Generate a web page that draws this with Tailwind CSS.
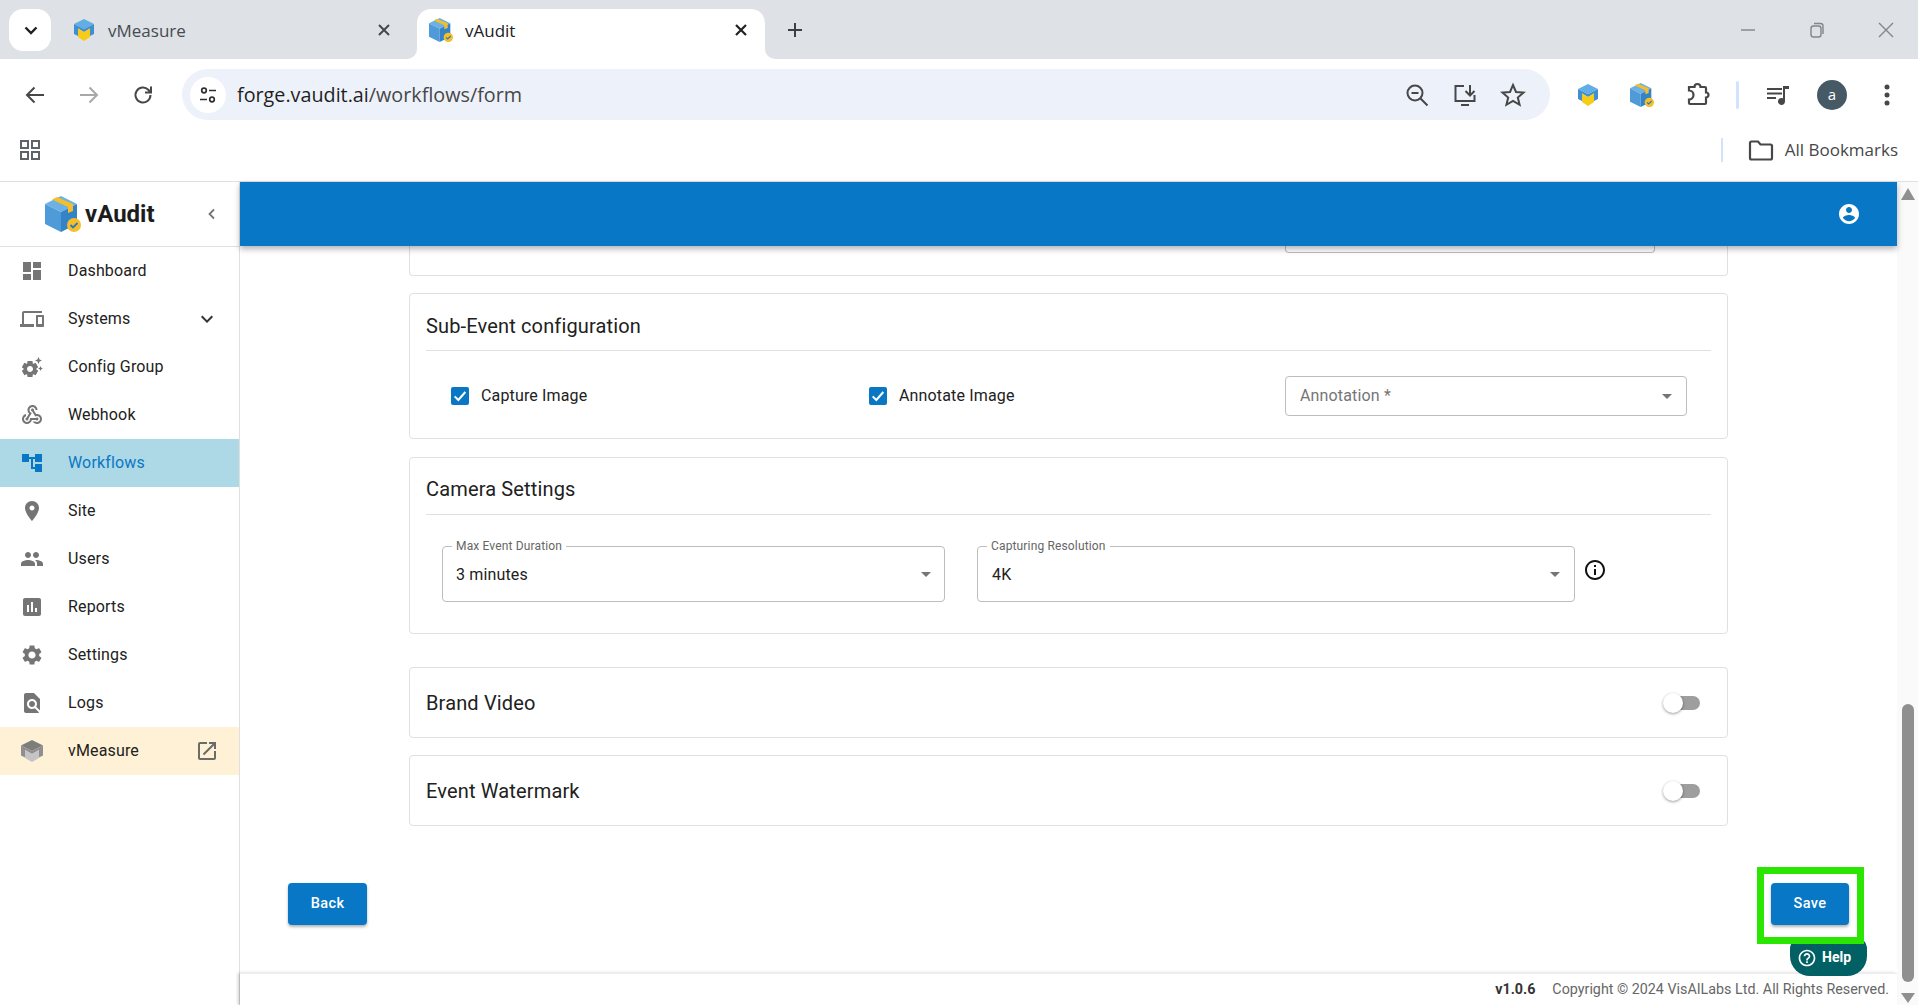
<!DOCTYPE html>
<html lang="en">

<head>
  <meta charset="UTF-8">
  <meta name="viewport" content="width=device-width, initial-scale=1.0">
  <title>vAudit</title>
  <script src="https://cdn.jsdelivr.net/npm/@tailwindcss/browser@4"></script>
</head>

<body class="w-[1918px] h-[1005px] overflow-hidden bg-white font-['Roboto',sans-serif] text-[#212121]">
  <svg class="absolute w-0 h-0">
    <symbol id="cube" viewBox="0 0 36 36">
      <polygon points="16,0 32,8 16,16 0,8" fill="#6db0e4" />
      <polygon points="0,8 16,16 16,36 0,28" fill="#4f9ad8" />
      <polygon points="16,16 32,8 32,28 16,36" fill="#3583c7" />
      <polygon points="7,3.5 12,1 28,8 28,15 23,17 23,11" fill="#f4bf2a" />
      <circle cx="29" cy="29" r="7" fill="#f4bf2a" />
      <path d="M25.5 29l2.5 2.5 4.5-4.5" fill="none" stroke="#2f78bd" stroke-width="1.8" />
    </symbol>
    <symbol id="cap" viewBox="0 0 24 24">
      <polygon points="12,1 22,6 12,11 2,6" fill="#62ade3" />
      <polygon points="2,6 12,11 12,14 6,10.5 6,18 2,16" fill="#3f8fd1" />
      <polygon points="22,6 12,11 12,14 18,10.5 18,18 22,16" fill="#3f8fd1" />
      <polygon points="6,10.5 12,14 18,10.5 18,19 12,23 6,19" fill="#f7cb17" />
    </symbol>
  </svg>

  <!-- tab strip -->
  <div class="flex h-[59px] bg-[#dee1e6] pl-[9px]">
    <div class="mt-[9px] flex h-[42px] w-[42px] items-center justify-center rounded-[14px] bg-white">
      <svg class="ml-[1px] h-[18px] w-[18px]" viewBox="0 0 18 18" fill="none" stroke="#1f1f1f" stroke-width="2.4"><path d="M3.5 6.5 9 12l5.5-5.5" /></svg>
    </div>
    <div class="flex h-[42px] w-[366px] mt-[9px] items-center pl-[21px] pr-[24px]">
      <svg class="h-[24px] w-[24px]"><use href="#cap" /></svg>
      <span class="ml-[12px] pt-[1px] font-['Open_Sans',sans-serif] text-[17px] text-[#454b50]">vMeasure</span>
      <svg class="ml-auto h-[18px] w-[18px]" viewBox="0 0 18 18" stroke="#45484c" stroke-width="2"><path d="M4 4l10 10M14 4 4 14" /></svg>
    </div>
    <div class="relative mt-[9px] flex h-[50px] w-[348px] items-center rounded-t-[14px] bg-white pb-[8px] pl-[12px] pr-[15px]">
      <svg class="absolute -left-[10px] bottom-0 h-[10px] w-[10px]" viewBox="0 0 10 10"><path d="M10 0v10H0a10 10 0 0 0 10-10z" fill="#fff" /></svg>
      <svg class="absolute -right-[10px] bottom-0 h-[10px] w-[10px]" viewBox="0 0 10 10"><path d="M0 0v10h10A10 10 0 0 1 0 0z" fill="#fff" /></svg>
      <svg class="h-[24px] w-[24px]"><use href="#cube" /></svg>
      <span class="ml-[12px] pt-[1px] font-['Open_Sans',sans-serif] text-[17px] text-[#202124]">vAudit</span>
      <svg class="ml-auto h-[18px] w-[18px]" viewBox="0 0 18 18" stroke="#202124" stroke-width="2.2"><path d="M4 4l10 10M14 4 4 14" /></svg>
    </div>
    <svg class="ml-[21px] mt-[21px] h-[18px] w-[18px]" viewBox="0 0 18 18" stroke="#3c4043" stroke-width="2"><path d="M9 2v14M2 9h14" /></svg>
    <div class="ml-auto flex h-[60px] items-center gap-[51px] pr-[23px]">
      <svg class="h-[18px] w-[18px]" viewBox="0 0 18 18" stroke="#80868b" stroke-width="1.4"><path d="M2 9h14" /></svg>
      <svg class="h-[18px] w-[18px]" viewBox="0 0 18 18" fill="none" stroke="#80868b" stroke-width="1.4"><rect x="3" y="5" width="10" height="11" rx="2.5" /><path d="M6 2.5h6.5A2.5 2.5 0 0 1 15 5v8" /></svg>
      <svg class="h-[18px] w-[18px]" viewBox="0 0 18 18" stroke="#80868b" stroke-width="1.4"><path d="M2 2l14 14M16 2 2 16" /></svg>
    </div>
  </div>

  <!-- toolbar -->
  <div class="relative flex h-[71px] rounded-t-[12px] bg-white pl-[23px]">
    <div class="flex h-[71px] w-[159px] items-center">
      <svg class="h-[24px] w-[24px]" viewBox="0 0 24 24" fill="none" stroke="#474747" stroke-width="2"><path d="M21 12H4M11.5 4.5 4 12l7.5 7.5" /></svg>
      <svg class="ml-[30px] h-[24px] w-[24px]" viewBox="0 0 24 24" fill="none" stroke="#a8a8a8" stroke-width="2"><path d="M3 12h17M12.5 4.5 20 12l-7.5 7.5" /></svg>
      <svg class="ml-[30px] h-[24px] w-[24px]" viewBox="0 0 24 24" fill="none" stroke="#474747" stroke-width="2"><path d="M19.5 12a7.5 7.5 0 1 1-2.2-5.3L20 9.5M20 3.5v6h-6" /></svg>
    </div>
    <div class="mt-[10px] flex h-[51px] w-[1368px] items-center rounded-full bg-[#edf2fa] pl-[8px] pr-[24px]">
      <div class="flex h-[36px] w-[36px] items-center justify-center rounded-full bg-white">
        <svg class="h-[20px] w-[20px]" viewBox="0 0 20 20" fill="none" stroke="#303030" stroke-width="1.7"><circle cx="6" cy="5.5" r="2.3" /><path d="M11 5.5h7M2 14.5h7" /><circle cx="14" cy="14.5" r="2.3" /></svg>
      </div>
      <span class="ml-[11px] font-['Open_Sans',sans-serif] text-[19.75px] text-[#1f1f1f]">forge.vaudit.ai<span class="text-[#474747]">/workflows/form</span></span>
      <svg class="ml-auto h-[26px] w-[26px]" viewBox="0 0 26 26" fill="none" stroke="#474747" stroke-width="2"><circle cx="11" cy="11" r="7.5" /><path d="M7.5 11h7M16.5 16.5l7 7" /></svg>
      <svg class="ml-[22px] h-[26px] w-[26px]" viewBox="0 0 26 26" fill="none" stroke="#474747" stroke-width="2"><path d="M12 4H3.500v15h19v-6M9 23h8M18 3v10M13.500 9l4.500 4.500 4.500-4.500" /></svg>
      <svg class="ml-[22px] h-[26px] w-[26px]" viewBox="0 0 26 26" fill="none" stroke="#474747" stroke-width="2"><path d="M13 3l3 7 7.500.6-5.700 4.900 1.800 7.300L13 19l-6.600 3.800 1.800-7.300-5.700-4.900L10 10z" /></svg>
    </div>
    <div class="mt-[10px] flex h-[51px] items-center">
      <svg class="ml-[26px] h-[24px] w-[24px]"><use href="#cap" /></svg>
      <svg class="ml-[30px] h-[24px] w-[24px]"><use href="#cube" /></svg>
      <svg class="ml-[31px] h-[26px] w-[26px]" viewBox="0 0 26 26" fill="none" stroke="#474747" stroke-width="2.2"><path d="M4 5h5.500a3 3 0 0 1 6 0H20a1 1 0 0 1 1 1v4.500a2.500 2.500 0 0 1 0 5V21a1 1 0 0 1-1 1H5a1 1 0 0 1-1-1v-3.500a4.500 4.500 0 0 0 0-9z" /></svg>
      <div class="ml-[25px] h-[28px] w-[3px] rounded-full bg-[#d3e3fd]"></div>
      <svg class="ml-[27px] h-[24px] w-[24px]" viewBox="0 0 24 24" fill="#474747"><path d="M1 5h15v2H1zM1 9.500h15v2H1zM1 14h9v2H1zM17 3h6v3h-4v12.500a3.500 3.500 0 1 1-2-3.200z" /></svg>
      <div class="ml-[27px] flex h-[30px] w-[30px] items-center justify-center rounded-full bg-[#455a64] font-['Open_Sans',sans-serif] text-[15px] text-white">a</div>
      <svg class="ml-[37px] h-[22px] w-[6px]" viewBox="0 0 6 22" fill="#474747"><circle cx="3" cy="3" r="2.500" /><circle cx="3" cy="11" r="2.500" /><circle cx="3" cy="19" r="2.500" /></svg>
    </div>
  </div>

  <!-- bookmarks bar -->
  <div class="flex h-[52px] items-center border-b border-[#e0e0e0] pb-[11px] pl-[20px] pr-[20px]">
    <svg class="h-[20px] w-[20px]" viewBox="0 0 20 20" fill="none" stroke="#5f6368" stroke-width="2"><rect x="1" y="1" width="7" height="7" /><rect x="12" y="1" width="7" height="7" /><rect x="1" y="12" width="7" height="7" /><rect x="12" y="12" width="7" height="7" /></svg>
    <div class="ml-auto h-[24px] w-[2px] bg-[#d3e3fd]"></div>
    <svg class="ml-[25px] h-[24px] w-[26px]" viewBox="0 0 26 24" fill="none" stroke="#474747" stroke-width="2.200"><path d="M2 5a1.500 1.500 0 0 1 1.500-1.500H10l2.500 3h10A1.500 1.500 0 0 1 24 8v12a1.500 1.500 0 0 1-1.500 1.500h-19A1.500 1.500 0 0 1 2 20z" /></svg>
    <span class="ml-[11px] font-['Open_Sans',sans-serif] text-[17px] text-[#474747]">All Bookmarks</span>
  </div>

  <div class="flex h-[823px]">
    <!-- sidebar -->
    <aside class="h-full w-[240px] shrink-0 border-r border-[#e0e0e0]">
      <div class="flex h-[65px] items-center border-b border-[#e0e0e0] pl-[45px]">
        <svg class="h-[36px] w-[36px]"><use href="#cube" /></svg>
        <span class="ml-[4px] text-[24px] font-bold text-[#1c1c1c]">vAudit</span>
        <svg class="ml-[45px] h-[24px] w-[24px]" viewBox="0 0 24 24" fill="none" stroke="#757575" stroke-width="1.800"><path d="M14 7.500 9.500 12l4.500 4.500" /></svg>
      </div>
      <nav class="text-[16px] tracking-[0.15px]">
        <a class="flex h-[48px] items-center pl-[20px]">
          <svg class="h-[24px] w-[24px] fill-[#757575]" viewBox="0 0 24 24"><path d="M3 13h8V3H3v10zm0 8h8v-6H3v6zm10 0h8V11h-8v10zm0-18v6h8V3h-8z" /></svg>
          <span class="ml-[24px]">Dashboard</span>
        </a>
        <a class="flex h-[48px] items-center pl-[20px]">
          <svg class="h-[24px] w-[24px] fill-[#757575]" viewBox="0 0 24 24"><path d="M4 6h18V4H4c-1.100 0-2 .9-2 2v11H0v3h14v-3H4V6zm19 2h-6c-.55 0-1 .45-1 1v10c0 .55.45 1 1 1h6c.55 0 1-.45 1-1V9c0-.55-.45-1-1-1zm-1 9h-4v-7h4v7z" /></svg>
          <span class="ml-[24px]">Systems</span>
          <svg class="ml-auto mr-[20px] h-[24px] w-[24px] fill-[#333333]" viewBox="0 0 24 24"><path d="M16.590 8.590 12 13.170 7.410 8.590 6 10l6 6 6-6z" /></svg>
        </a>
        <a class="flex h-[48px] items-center pl-[20px]">
          <svg class="h-[24px] w-[24px] fill-[#757575]" viewBox="0 0 24 24"><path d="M17.410 6.590 15 5.500l2.410-1.090L18.500 2l1.090 2.410L22 5.500l-2.410 1.090L18.500 9l-1.090-2.410zm3.870 6.130L20.500 11l-.78 1.720-1.720.78 1.720.78.78 1.720.78-1.720L23 13.500l-1.720-.78zm-5.040 1.650 1.940 1.470-2.500 4.330-2.240-.94c-.2.130-.42.260-.64.370l-.3 2.400h-5l-.3-2.410c-.22-.11-.43-.23-.64-.37l-2.240.94-2.500-4.330 1.940-1.470c-.01-.11-.01-.24-.01-.36s0-.25.010-.37l-1.940-1.470 2.500-4.330 2.240.94c.2-.13.42-.26.64-.37L7.500 6h5l.3 2.410c.22.110.43.230.64.370l2.240-.94 2.500 4.330-1.940 1.470c.01.120.01.240.01.370s0 .240-.01.360zM13 14c0-1.660-1.340-3-3-3s-3 1.340-3 3 1.340 3 3 3 3-1.340 3-3z" /></svg>
          <span class="ml-[24px]">Config Group</span>
        </a>
        <a class="flex h-[48px] items-center pl-[20px]">
          <svg class="h-[24px] w-[24px] fill-[#757575]" viewBox="0 0 24 24"><path d="M10 15h5.880c.27-.31.67-.5 1.120-.5.83 0 1.500.67 1.500 1.500s-.67 1.500-1.500 1.500c-.44 0-.84-.19-1.120-.5H11.900c-.46 2.280-2.480 4-4.900 4-2.760 0-5-2.240-5-5 0-2.420 1.720-4.440 4-4.900v2.070c-1.160.41-2 1.530-2 2.830 0 1.650 1.350 3 3 3s3-1.350 3-3v-1zm2.500-11c1.650 0 3 1.350 3 3h2c0-2.760-2.240-5-5-5s-5 2.240-5 5c0 1.430.6 2.710 1.550 3.620l-2.350 3.900c-.68.14-1.200.75-1.200 1.480 0 .83.67 1.500 1.500 1.500s1.500-.67 1.500-1.500c0-.16-.02-.31-.07-.45l3.380-5.630C10.490 9.610 9.500 8.420 9.500 7c0-1.650 1.350-3 3-3zm4.500 9c-.64 0-1.230.2-1.720.54l-3.050-5.070C11.530 8.350 11 7.740 11 7c0-.83.67-1.500 1.500-1.500S14 6.170 14 7c0 .15-.02.29-.06.43l2.190 3.650c.28-.05.57-.08.87-.08 2.760 0 5 2.240 5 5s-2.240 5-5 5c-1.850 0-3.470-1.010-4.330-2.500h2.670c.48.32 1.050.5 1.660.5 1.650 0 3-1.350 3-3s-1.350-3-3-3z" /></svg>
          <span class="ml-[24px]">Webhook</span>
        </a>
        <a class="flex h-[48px] items-center bg-[#add8e6] pl-[20px] text-[#0a77c4]">
          <svg class="h-[24px] w-[24px] fill-[#0a77c4]" viewBox="0 0 24 24"><path d="M22 11V3h-7v3H9V3H2v8h7V8h2v10h4v3h7v-8h-7v3h-2V8h2v3z" /></svg>
          <span class="ml-[24px]">Workflows</span>
        </a>
        <a class="flex h-[48px] items-center pl-[20px]">
          <svg class="h-[24px] w-[24px] fill-[#757575]" viewBox="0 0 24 24"><path d="M12 2C8.130 2 5 5.130 5 9c0 5.250 7 13 7 13s7-7.750 7-13c0-3.870-3.130-7-7-7zm0 9.500c-1.380 0-2.500-1.120-2.500-2.500s1.120-2.500 2.500-2.500 2.500 1.120 2.500 2.500-1.120 2.500-2.500 2.500z" /></svg>
          <span class="ml-[24px]">Site</span>
        </a>
        <a class="flex h-[48px] items-center pl-[20px]">
          <svg class="h-[24px] w-[24px] fill-[#757575]" viewBox="0 0 24 24"><path d="M16 11c1.660 0 2.990-1.340 2.990-3S17.660 5 16 5c-1.660 0-3 1.340-3 3s1.340 3 3 3zm-8 0c1.660 0 2.990-1.340 2.990-3S9.660 5 8 5C6.340 5 5 6.340 5 8s1.340 3 3 3zm0 2c-2.330 0-7 1.170-7 3.500V19h14v-2.500c0-2.330-4.670-3.500-7-3.500zm8 0c-.29 0-.62.02-.97.05 1.160.84 1.970 1.970 1.970 3.450V19h6v-2.500c0-2.330-4.670-3.500-7-3.500z" /></svg>
          <span class="ml-[24px]">Users</span>
        </a>
        <a class="flex h-[48px] items-center pl-[20px]">
          <svg class="h-[24px] w-[24px] fill-[#757575]" viewBox="0 0 24 24"><path d="M19 3H5c-1.100 0-2 .9-2 2v14c0 1.100.9 2 2 2h14c1.100 0 2-.9 2-2V5c0-1.100-.9-2-2-2zM9 17H7v-7h2v7zm4 0h-2V7h2v10zm4 0h-2v-4h2v4z" /></svg>
          <span class="ml-[24px]">Reports</span>
        </a>
        <a class="flex h-[48px] items-center pl-[20px]">
          <svg class="h-[24px] w-[24px] fill-[#757575]" viewBox="0 0 24 24"><path d="M19.140 12.940c.04-.3.06-.61.06-.94 0-.32-.02-.64-.07-.94l2.030-1.580c.18-.14.23-.41.12-.61l-1.920-3.320c-.12-.22-.37-.29-.59-.22l-2.390.96c-.5-.38-1.030-.7-1.620-.94l-.36-2.540c-.04-.24-.24-.41-.48-.41h-3.840c-.24 0-.43.17-.47.41l-.36 2.540c-.59.24-1.130.57-1.620.94l-2.390-.96c-.22-.08-.47 0-.59.22L2.740 8.870c-.12.21-.08.47.12.61l2.030 1.580c-.05.3-.09.63-.09.94s.02.64.07.94l-2.030 1.580c-.18.14-.23.41-.12.61l1.920 3.320c.12.22.37.29.59.22l2.390-.96c.5.38 1.030.7 1.620.94l.36 2.540c.05.24.24.41.48.41h3.840c.24 0 .44-.17.47-.41l.36-2.540c.59-.24 1.130-.56 1.620-.94l2.390.96c.22.08.47 0 .59-.22l1.920-3.320c.12-.22.07-.47-.12-.61l-2.010-1.580zM12 15.600c-1.980 0-3.600-1.620-3.600-3.600s1.620-3.600 3.600-3.600 3.600 1.620 3.600 3.600-1.620 3.600-3.600 3.600z" /></svg>
          <span class="ml-[24px]">Settings</span>
        </a>
        <a class="flex h-[48px] items-center pl-[20px]">
          <svg class="h-[24px] w-[24px] fill-[#757575]" viewBox="0 0 24 24"><path d="M20 19.590V8l-6-6H6c-1.100 0-1.990.9-1.990 2L4 20c0 1.100.89 2 1.990 2H18c.45 0 .85-.15 1.190-.4l-4.430-4.430c-.8.52-1.740.83-2.760.83-2.760 0-5-2.240-5-5s2.240-5 5-5 5 2.240 5 5c0 1.020-.31 1.960-.83 2.750L20 19.590zM9 13c0 1.660 1.340 3 3 3s3-1.340 3-3-1.340-3-3-3-3 1.340-3 3z" /></svg>
          <span class="ml-[24px]">Logs</span>
        </a>
        <a class="flex h-[48px] items-center bg-[#fff1d6] pl-[20px]">
          <svg class="h-[24px] w-[24px]" viewBox="0 0 24 24"><polygon points="12,1 23,6.500 12,12 1,6.500" fill="#7d7d7d" /><polygon points="1,6.500 12,12 12,15 5,11 5,18.500 1,16.500" fill="#8f8f8f" /><polygon points="23,6.500 12,12 12,15 19,11 19,18.500 23,16.500" fill="#8f8f8f" /><polygon points="5,11 12,15 19,11 19,19 12,23 5,19" fill="#c4c4c4" /></svg>
          <span class="ml-[24px]">vMeasure</span>
          <svg class="ml-auto mr-[20px] h-[24px] w-[24px] fill-[#6b6b6b]" viewBox="0 0 24 24"><path d="M19 19H5V5h7V3H5c-1.110 0-2 .9-2 2v14c0 1.100.89 2 2 2h14c1.100 0 2-.9 2-2v-7h-2v7zM14 3v2h3.590l-9.830 9.830 1.410 1.410L19 6.410V10h2V3h-7z" /></svg>
        </a>
      </nav>
    </aside>

    <!-- main column -->
    <main class="relative flex h-full w-[1657px] flex-col">
      <header class="relative z-10 flex h-[64px] shrink-0 items-center justify-end bg-[#0877c5] pr-[36px] shadow-[0_3px_6px_rgba(0,0,0,0.3)]">
        <svg class="h-[24px] w-[24px] fill-white" viewBox="0 0 24 24"><path d="M12 2C6.480 2 2 6.480 2 12s4.480 10 10 10 10-4.480 10-10S17.520 2 12 2zm0 3c1.660 0 3 1.340 3 3s-1.340 3-3 3-3-1.340-3-3 1.340-3 3-3zm0 14.200c-2.500 0-4.710-1.280-6-3.220.03-1.990 4-3.080 6-3.080 1.990 0 5.970 1.090 6 3.080-1.290 1.940-3.500 3.220-6 3.220z" /></svg>
      </header>

      <div class="flex flex-1 flex-col px-[48px]">
        <div class="mx-[121px] flex flex-col">
          <!-- bottom of the card above, scrolled away -->
          <div class="h-[30px] rounded-b-[4px] border-x border-b border-[#e0e0e0]">
            <div class="ml-[875px] h-[7px] w-[370px] rounded-b-[4px] border-x border-b border-[#bdbdbd]"></div>
          </div>

          <section class="mt-[17px] h-[146px] rounded-[4px] border border-[#e0e0e0] px-[16px]">
            <h2 class="flex h-[57px] items-center border-b border-[#e0e0e0] pt-[8px] text-[20px] tracking-[0.15px]">Sub-Event configuration</h2>
            <div class="mt-[25px] flex h-[40px] items-center pl-[25px] text-[16px] tracking-[0.15px]">
              <label class="flex w-[418px] items-center">
                <span class="flex h-[18px] w-[18px] items-center justify-center rounded-[2px] bg-[#0a77c4]">
                  <svg class="h-[16px] w-[16px]" viewBox="0 0 24 24" fill="none" stroke="#fff" stroke-width="3"><path d="M4 12.500 9.500 18 20 6" /></svg>
                </span>
                <span class="ml-[12px]">Capture Image</span>
              </label>
              <label class="flex w-[416px] items-center">
                <span class="flex h-[18px] w-[18px] items-center justify-center rounded-[2px] bg-[#0a77c4]">
                  <svg class="h-[16px] w-[16px]" viewBox="0 0 24 24" fill="none" stroke="#fff" stroke-width="3"><path d="M4 12.500 9.500 18 20 6" /></svg>
                </span>
                <span class="ml-[12px]">Annotate Image</span>
              </label>
              <div class="flex h-[40px] w-[402px] items-center justify-between rounded-[4px] border border-[#bdbdbd] pl-[14px] pr-[7px] text-[#757575]">
                <span>Annotation *</span>
                <svg class="h-[24px] w-[24px] fill-[#757575]" viewBox="0 0 24 24"><path d="M7 10l5 5 5-5z" /></svg>
              </div>
            </div>
          </section>

          <section class="mt-[18px] h-[177px] rounded-[4px] border border-[#e0e0e0] px-[16px]">
            <h2 class="flex h-[57px] items-center border-b border-[#e0e0e0] pt-[6px] text-[20px] tracking-[0.15px]">Camera Settings</h2>
            <div class="mt-[31px] flex items-start pl-[16px] text-[16px] tracking-[0.15px]">
              <div class="relative flex h-[56px] w-[503px] items-center justify-between rounded-[4px] border border-[#bdbdbd] pl-[13px] pr-[6px]">
                <span class="absolute -top-[8px] left-[9px] bg-white px-[4px] text-[12px] leading-[14px] text-[#666666]">Max Event Duration</span>
                <span class="pt-[1px]">3 minutes</span>
                <svg class="h-[24px] w-[24px] fill-[#757575]" viewBox="0 0 24 24"><path d="M7 10l5 5 5-5z" /></svg>
              </div>
              <div class="relative ml-[32px] flex h-[56px] w-[598px] items-center justify-between rounded-[4px] border border-[#bdbdbd] pl-[14px] pr-[7px]">
                <span class="absolute -top-[8px] left-[9px] bg-white px-[4px] text-[12px] leading-[14px] text-[#666666]">Capturing Resolution</span>
                <span class="pt-[1px]">4K</span>
                <svg class="h-[24px] w-[24px] fill-[#757575]" viewBox="0 0 24 24"><path d="M7 10l5 5 5-5z" /></svg>
              </div>
              <svg class="ml-[8px] mt-[12px] h-[24px] w-[24px] fill-[#111111]" viewBox="0 0 24 24"><path d="M11 7h2v2h-2zm0 4h2v6h-2zm1-9C6.480 2 2 6.480 2 12s4.480 10 10 10 10-4.480 10-10S17.520 2 12 2zm0 18c-4.410 0-8-3.590-8-8s3.590-8 8-8 8 3.590 8 8-3.590 8-8 8z" /></svg>
            </div>
          </section>

          <section class="mt-[33px] flex h-[71px] items-center justify-between rounded-[4px] border border-[#e0e0e0] pl-[16px] pr-[27px]">
            <h2 class="text-[20px] tracking-[0.15px]">Brand Video</h2>
            <div class="relative h-[14px] w-[34px] rounded-full bg-[#9e9e9e]">
              <div class="absolute -left-[3px] -top-[3px] h-[20px] w-[20px] rounded-full bg-white shadow-[0_1px_3px_rgba(0,0,0,0.4)]"></div>
            </div>
          </section>

          <section class="mt-[17px] flex h-[71px] items-center justify-between rounded-[4px] border border-[#e0e0e0] pl-[16px] pr-[27px]">
            <h2 class="text-[20px] tracking-[0.15px]">Event Watermark</h2>
            <div class="relative h-[14px] w-[34px] rounded-full bg-[#9e9e9e]">
              <div class="absolute -left-[3px] -top-[3px] h-[20px] w-[20px] rounded-full bg-white shadow-[0_1px_3px_rgba(0,0,0,0.4)]"></div>
            </div>
          </section>
        </div>

        <div class="mt-[57px] flex justify-between">
          <button class="h-[42px] w-[79px] rounded-[4px] bg-[#0877c5] text-[14.5px] font-medium tracking-[0.4px] text-white shadow-[0_2px_3px_rgba(0,0,0,0.3)]">Back</button>
          <div class="relative z-20">
            <button class="h-[42px] w-[78px] rounded-[4px] bg-[#0877c5] text-[14.5px] font-medium tracking-[0.4px] text-white shadow-[0_2px_3px_rgba(0,0,0,0.3)]">Save</button>
            <div class="absolute -bottom-[19px] -left-[14px] -right-[15px] -top-[16px] border-[7px] border-[#2ae600]"></div>
          </div>
        </div>
      </div>

      <footer class="flex h-[32px] shrink-0 items-center justify-end border-t border-[#eeeeee] pr-[8px] text-[14.3px] text-[#666666] shadow-[-2px_0_3px_rgba(0,0,0,0.2)]">
        <b class="mr-[17px] font-bold text-[#333333]">v1.0.6</b>
        <span>Copyright © 2024 VisAILabs Ltd. All Rights Reserved.</span>
      </footer>

      <!-- floating help button -->
      <div class="absolute left-[1550px] top-[755px] z-10 flex h-[39px] w-[77px] items-center rounded-b-[20px] rounded-t-[12px] bg-[#006064] pl-[7px] pt-[2px] text-[14px] font-bold text-white">
        <svg class="h-[20px] w-[20px] fill-white" viewBox="0 0 24 24"><path d="M11 18h2v-2h-2v2zm1-16C6.480 2 2 6.480 2 12s4.480 10 10 10 10-4.480 10-10S17.520 2 12 2zm0 18c-4.410 0-8-3.590-8-8s3.590-8 8-8 8 3.590 8 8-3.590 8-8 8zm0-14c-2.210 0-4 1.790-4 4h2c0-1.100.9-2 2-2s2 .9 2 2c0 2-3 1.750-3 5h2c0-2.250 3-2.500 3-5 0-2.210-1.790-4-4-4z" /></svg>
        <span class="ml-[5px]">Help</span>
      </div>
    </main>

    <!-- scrollbar -->
    <div class="flex h-full w-[21px] flex-col items-center bg-[#fafafa] pl-[1px]">
      <svg class="mt-[6px] h-[12px] w-[14px] fill-[#8f8f8f]" viewBox="0 0 14 12"><path d="M7 0l7 12H0z" /></svg>
      <div class="mt-[504px] h-[278px] w-[12px] rounded-full bg-[#8f8f8f]"></div>
      <svg class="mt-[11px] h-[10px] w-[14px] fill-[#8f8f8f]" viewBox="0 0 14 10"><path d="M0 0h14L7 10z" /></svg>
    </div>
  </div>
</body>

</html>
